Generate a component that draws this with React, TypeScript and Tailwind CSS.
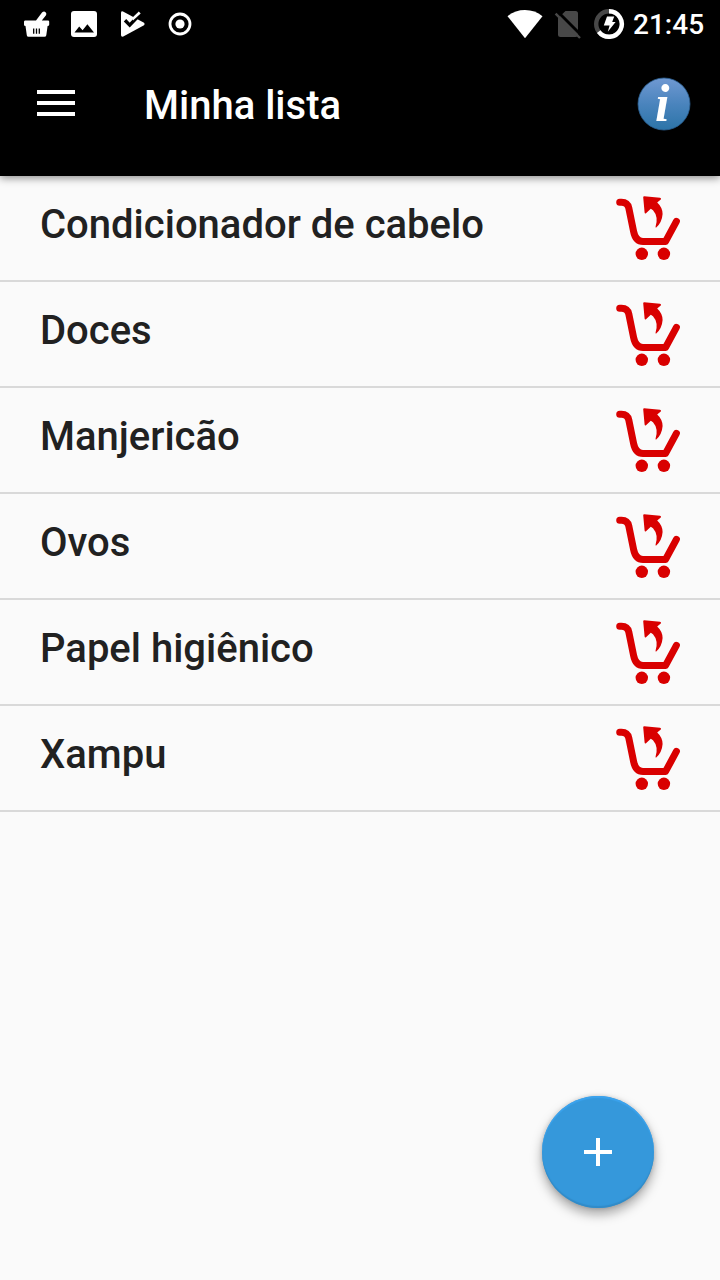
const items = [
  "Condicionador de cabelo",
  "Doces",
  "Manjericão",
  "Ovos",
  "Papel higiênico",
  "Xampu",
];

function NotificationIcons() {
  return (
    <svg width="176" height="48" viewBox="20 0 176 48" fill="none">
      {/* basket */}
      <path
        d="M25 20.5H36L42 12.6Q43.8 10.8 45.6 12.2Q47 13.6 46 15.2L41.8 20.5H48.2Q49.4 20.7 49.2 22V24.8Q49 26 47.6 26L46.3 35.2Q46 36.8 44.4 36.8H28.6Q27 36.8 26.8 35.2L25.5 26Q24 26 24 24.8V22Q23.9 20.6 25 20.5Z"
        fill="#fff"
      />
      <path d="M33.7 28.5V33.7M36.5 28.5V33.7M39.3 28.5V33.7" stroke="#000" strokeWidth="1.3" />
      {/* picture */}
      <rect x="71" y="11" width="26" height="26" rx="3" fill="#fff" />
      <path d="M74.5 32.4L79.2 26.4L82.6 30.3L87.4 24.2L94 32.4Z" fill="#000" />
      {/* play check */}
      <path
        d="M121 12.8Q121.2 10.8 123 11.5L144 22.8Q145.4 24 144 25.2L123.3 36.6Q121 37.2 121 35Z"
        fill="#fff"
      />
      <path d="M125 20.3L129.7 25.1L141 13.3" stroke="#000" strokeWidth="3.4" />
      <path d="M132 18L138.8 11.6L140.7 13.4L133 20.4Z" fill="#fff" />
      {/* record */}
      <circle cx="180" cy="24" r="10" stroke="#fff" strokeWidth="2.8" />
      <circle cx="180" cy="24" r="4.6" fill="#fff" />
    </svg>
  );
}

function SystemIcons() {
  return (
    <svg width="120" height="48" viewBox="506 0 120 48" fill="none">
      {/* wifi */}
      <path d="M507.5 16.2Q515 10 525 10T542.5 16.2L525 38.2Z" fill="#fff" />
      {/* no sim */}
      <path
        d="M565.5 11H575.5Q578 11 578 13.5V34.5Q578 37 575.5 37H560.5Q558 37 558 34.5V18.2Z"
        fill="#484848"
      />
      <path d="M557.5 11.5L583 37" stroke="#000" strokeWidth="3" />
      <path d="M555.6 13.6L580 38" stroke="#484848" strokeWidth="2.4" />
      {/* battery */}
      <circle cx="609" cy="24" r="12.8" stroke="#484848" strokeWidth="4.4" />
      <path d="M609 11.2A12.8 12.8 0 1 1 598.7 31.6" stroke="#fff" strokeWidth="4.4" />
      <path d="M607 16.6H614.2L612.2 22H615.6L607.8 31.8L609.6 25.6H603.8Z" fill="#fff" />
    </svg>
  );
}

function InfoIcon() {
  return (
    <svg width="54" height="54" viewBox="0 0 54 54">
      <defs>
        <linearGradient id="info" x1="0" y1="0" x2="0" y2="1">
          <stop offset="0" stopColor="#7099d2" />
          <stop offset="0.5" stopColor="#4a84bd" />
          <stop offset="1" stopColor="#2c74a8" />
        </linearGradient>
      </defs>
      <circle cx="27" cy="27" r="26" fill="url(#info)" stroke="#2b5f92" strokeWidth="0.8" />
      <text
        x="18"
        y="43.5"
        fill="#fff"
        fontFamily="Liberation Serif, serif"
        fontSize="52"
        fontWeight="700"
        fontStyle="italic"
      >
        i
      </text>
    </svg>
  );
}

function CartIcon() {
  return (
    <svg width="90" height="90" viewBox="0 0 90 90" fill="none">
      <path
        d="M15.7 18.2H17.5Q23.6 18.2 24.8 24L29.6 47.5Q31.6 57.4 39 57.4H61.6L72.4 37.4"
        stroke="#d90000"
        strokeWidth="7"
        strokeLinecap="round"
        strokeLinejoin="round"
      />
      <circle cx="37.8" cy="69.8" r="6.2" fill="#d90000" />
      <circle cx="59.9" cy="69.8" r="6.2" fill="#d90000" />
      <path
        d="M40.2 12.2L56 13.7Q57.7 14.2 56.8 15.4L53.2 18.4Q58.6 23.4 58.6 30Q58 38.4 52.2 43.6Q51.4 43.8 51.6 42.6Q54.6 32.5 49 26.2L46.8 24.7L42 29.2Q40.8 29.8 40.6 28.5L39.2 13.3Q39.2 12.2 40.2 12.2Z"
        fill="#d90000"
      />
    </svg>
  );
}

export default function App() {
  return (
    <div className="relative flex h-[1280px] w-[720px] flex-col overflow-hidden bg-[#fafafa] font-['Roboto',sans-serif] font-medium">
      <header className="z-10 bg-black text-white shadow-[0_2px_8px_rgba(0,0,0,0.45)]">
        <div className="flex h-12 justify-between pr-4 pl-5">
          <NotificationIcons />
          <div className="flex">
            <SystemIcons />
            <span className="w-[71px] pl-[0px] pt-[1px] text-[28px] leading-[48px] whitespace-nowrap ml-[7px]">
              21:45
            </span>
          </div>
        </div>
        <div className="flex h-32 items-center pr-[29px] pl-[37px] pb-[0px]">
          <button className="-mt-[18px] flex w-[38px] flex-col gap-[7px]">
            <span className="h-1 bg-white" />
            <span className="h-1 bg-white" />
            <span className="h-1 bg-white" />
          </button>
          <h1 className="-mt-[12px] ml-[69px] flex-1 text-[40px] leading-[48px]">
            Minha lista
          </h1>
          <button className="-mt-[17px]">
            <InfoIcon />
          </button>
        </div>
      </header>

      <ul>
        {items.map((item) => (
          <li
            key={item}
            className="flex h-[106px] justify-between border-b-2 border-[#d9d9d9] pr-[26px] pl-10"
          >
            <span className="pt-[25px] text-[40px] leading-[48px] text-[#212121]">
              {item}
            </span>
            <span className="mt-2">
              <CartIcon />
            </span>
          </li>
        ))}
      </ul>

      <button className="absolute right-[66px] bottom-[72px] flex h-28 w-28 items-center justify-center rounded-full bg-[#3598db] shadow-[0_6px_12px_rgba(0,0,0,0.35),0_0_4px_rgba(0,0,0,0.15),inset_0_2px_1px_#3ba3ee,inset_0_-2px_1px_#318bc8]">
        <svg width="28" height="28" viewBox="0 0 28 28">
          <path d="M14 0V28M0 14H28" stroke="#fff" strokeWidth="4" />
        </svg>
      </button>
    </div>
  );
}
